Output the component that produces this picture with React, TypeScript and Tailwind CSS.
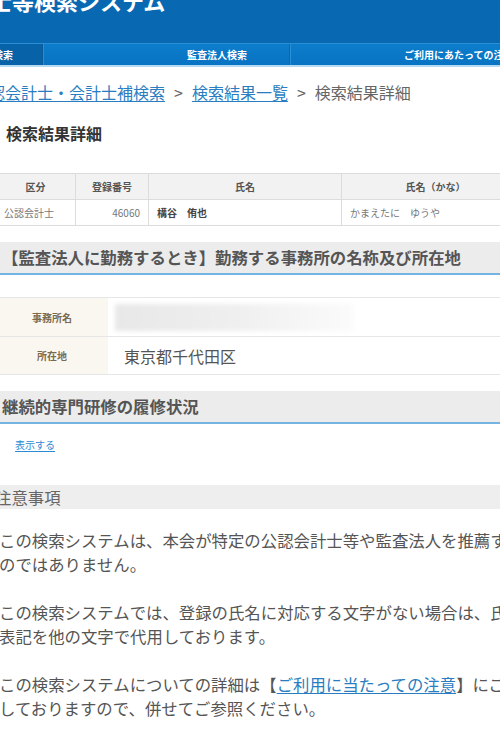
import React from "react";

const font = "font-['Noto_Sans_CJK_JP','Noto_Sans',sans-serif]";

function SectionHeading({ children }: { children: React.ReactNode }) {
  return (
    <div className="-ml-[10px] w-[540px] h-[33px] flex items-center bg-[#ececec] border-b-2 border-[#74b3e2] pl-[12px] text-[16.4px] font-bold text-[#555] whitespace-nowrap">
      {children}
    </div>
  );
}

export default function App() {
  return (
    <div className={`w-[500px] h-[750px] overflow-hidden bg-white ${font}`}>
      {/* header */}
      <div className="h-[43px] bg-[#0869b2] overflow-hidden">
        <div className="-ml-[98px] -mt-[15px] whitespace-nowrap text-[22px] leading-[30px] font-bold text-white">
          公認会計士等検索システム
        </div>
      </div>
      <nav className="flex h-[22px] bg-linear-to-b from-[#0c7dcc] to-[#0873c2] border-t border-[#2b8fd6] text-[10px] font-bold text-white whitespace-nowrap">
        <div className="w-[43px] flex items-center justify-end overflow-hidden bg-[#0762a7] border-r border-[#0a5a96] pr-[29px]">
          <span>公認会計士・会計士補検索</span>
        </div>
        <div className="w-[247px] flex items-center pl-[144px] border-r border-[#0a66ad] shadow-[inset_1px_0_0_#2b8fd6]">
          監査法人検索
        </div>
        <div className="flex-1 min-w-0 flex items-center overflow-hidden pl-[114px] shadow-[inset_1px_0_0_#2b8fd6]">
          ご利用にあたっての注意事項
        </div>
      </nav>
      <div className="h-[2px] bg-[#b7daf3]" />

      <main>
        {/* breadcrumb */}
        <div className="mt-[13px] -ml-[27px] whitespace-nowrap text-[16px] leading-[24px] text-[#666]">
          <a className="text-[#2a7dc0] underline underline-offset-2">公認会計士・会計士補検索</a>
          <span className="mx-[9px]">&gt;</span>
          <a className="text-[#2a7dc0] underline underline-offset-2">検索結果一覧</a>
          <span className="mx-[9px]">&gt;</span>
          <span>検索結果詳細</span>
        </div>

        <h1 className="mt-[17px] pl-[6px] text-[16px] leading-[24px] font-bold text-[#333]">検索結果詳細</h1>

        {/* result table */}
        <table className="mt-[28px] -ml-[5px] w-[534px] table-fixed border-collapse text-[10px] whitespace-nowrap">
          <colgroup>
            <col className="w-[80px]" />
            <col className="w-[73px]" />
            <col className="w-[193px]" />
            <col className="w-[188px]" />
          </colgroup>
          <thead>
            <tr className="h-[26px] bg-[#f2f2f2] text-[#555] font-bold">
              <th className="border border-[#dcdcdc] font-bold">区分</th>
              <th className="border border-[#dcdcdc] font-bold">登録番号</th>
              <th className="border border-[#dcdcdc] font-bold">氏名</th>
              <th className="border border-[#dcdcdc] font-bold">氏名（かな）</th>
            </tr>
          </thead>
          <tbody>
            <tr className="h-[26px] text-[#777]">
              <td className="border border-[#dcdcdc] pl-[8px]">公認会計士</td>
              <td className="border border-[#dcdcdc] pr-[8px] text-right">46060</td>
              <td className="border border-[#dcdcdc] pl-[8px] font-bold text-[#444]">構谷　侑也</td>
              <td className="border border-[#dcdcdc] pl-[8px]">かまえたに　ゆうや</td>
            </tr>
          </tbody>
        </table>

        <div className="mt-[16px]">
          <SectionHeading>【監査法人に勤務するとき】勤務する事務所の名称及び所在地</SectionHeading>
        </div>

        {/* office table */}
        <table className="mt-[22px] -ml-[4px] w-[540px] table-fixed border-collapse whitespace-nowrap">
          <colgroup>
            <col className="w-[112px]" />
            <col />
          </colgroup>
          <tbody>
            <tr className="h-[39px] border-y border-[#e6e6e6]">
              <th className="bg-[#faf7f0] text-[10px] font-bold text-[#7a6a4e]">事務所名</th>
              <td className="pl-[16px]">
                <div className="-ml-[9px] w-[238px] h-[27px] blur-[2px] bg-linear-to-r from-[#e8e8e8] via-[#efefef] to-[#fbfbfb]" />
              </td>
            </tr>
            <tr className="h-[38px] border-y border-[#e6e6e6]">
              <th className="bg-[#faf7f0] text-[10px] font-bold text-[#7a6a4e]">所在地</th>
              <td className="pl-[16px] text-[16px] text-[#555]">東京都千代田区</td>
            </tr>
          </tbody>
        </table>

        <div className="mt-[16px]">
          <SectionHeading>継続的専門研修の履修状況</SectionHeading>
        </div>

        <div className="mt-[14px] pl-[15px] text-[10px] leading-[14px]">
          <a className="text-[#2b8ad4] underline underline-offset-2">表示する</a>
        </div>

        {/* notes */}
        <div className="mt-[33px] h-[24px] flex items-center bg-[#eeeeee]">
          <span className="-ml-[5px] text-[16.4px] text-[#666]">注意事項</span>
        </div>

        <div className="-ml-px w-[580px] text-[16.4px] leading-[24px] text-[#555] whitespace-nowrap">
          <p className="mt-[19px]">
            この検索システムは、本会が特定の公認会計士等や監査法人を推薦するも
            <br />
            のではありません。
          </p>
          <p className="mt-[24px]">
            この検索システムでは、登録の氏名に対応する文字がない場合は、氏名の
            <br />
            表記を他の文字で代用しております。
          </p>
          <p className="mt-[24px]">
            この検索システムについての詳細は【
            <a className="text-[#2a7dc0] underline underline-offset-2">ご利用に当たっての注意</a>
            】にご記載
            <br />
            しておりますので、併せてご参照ください。
          </p>
        </div>
      </main>
    </div>
  );
}
